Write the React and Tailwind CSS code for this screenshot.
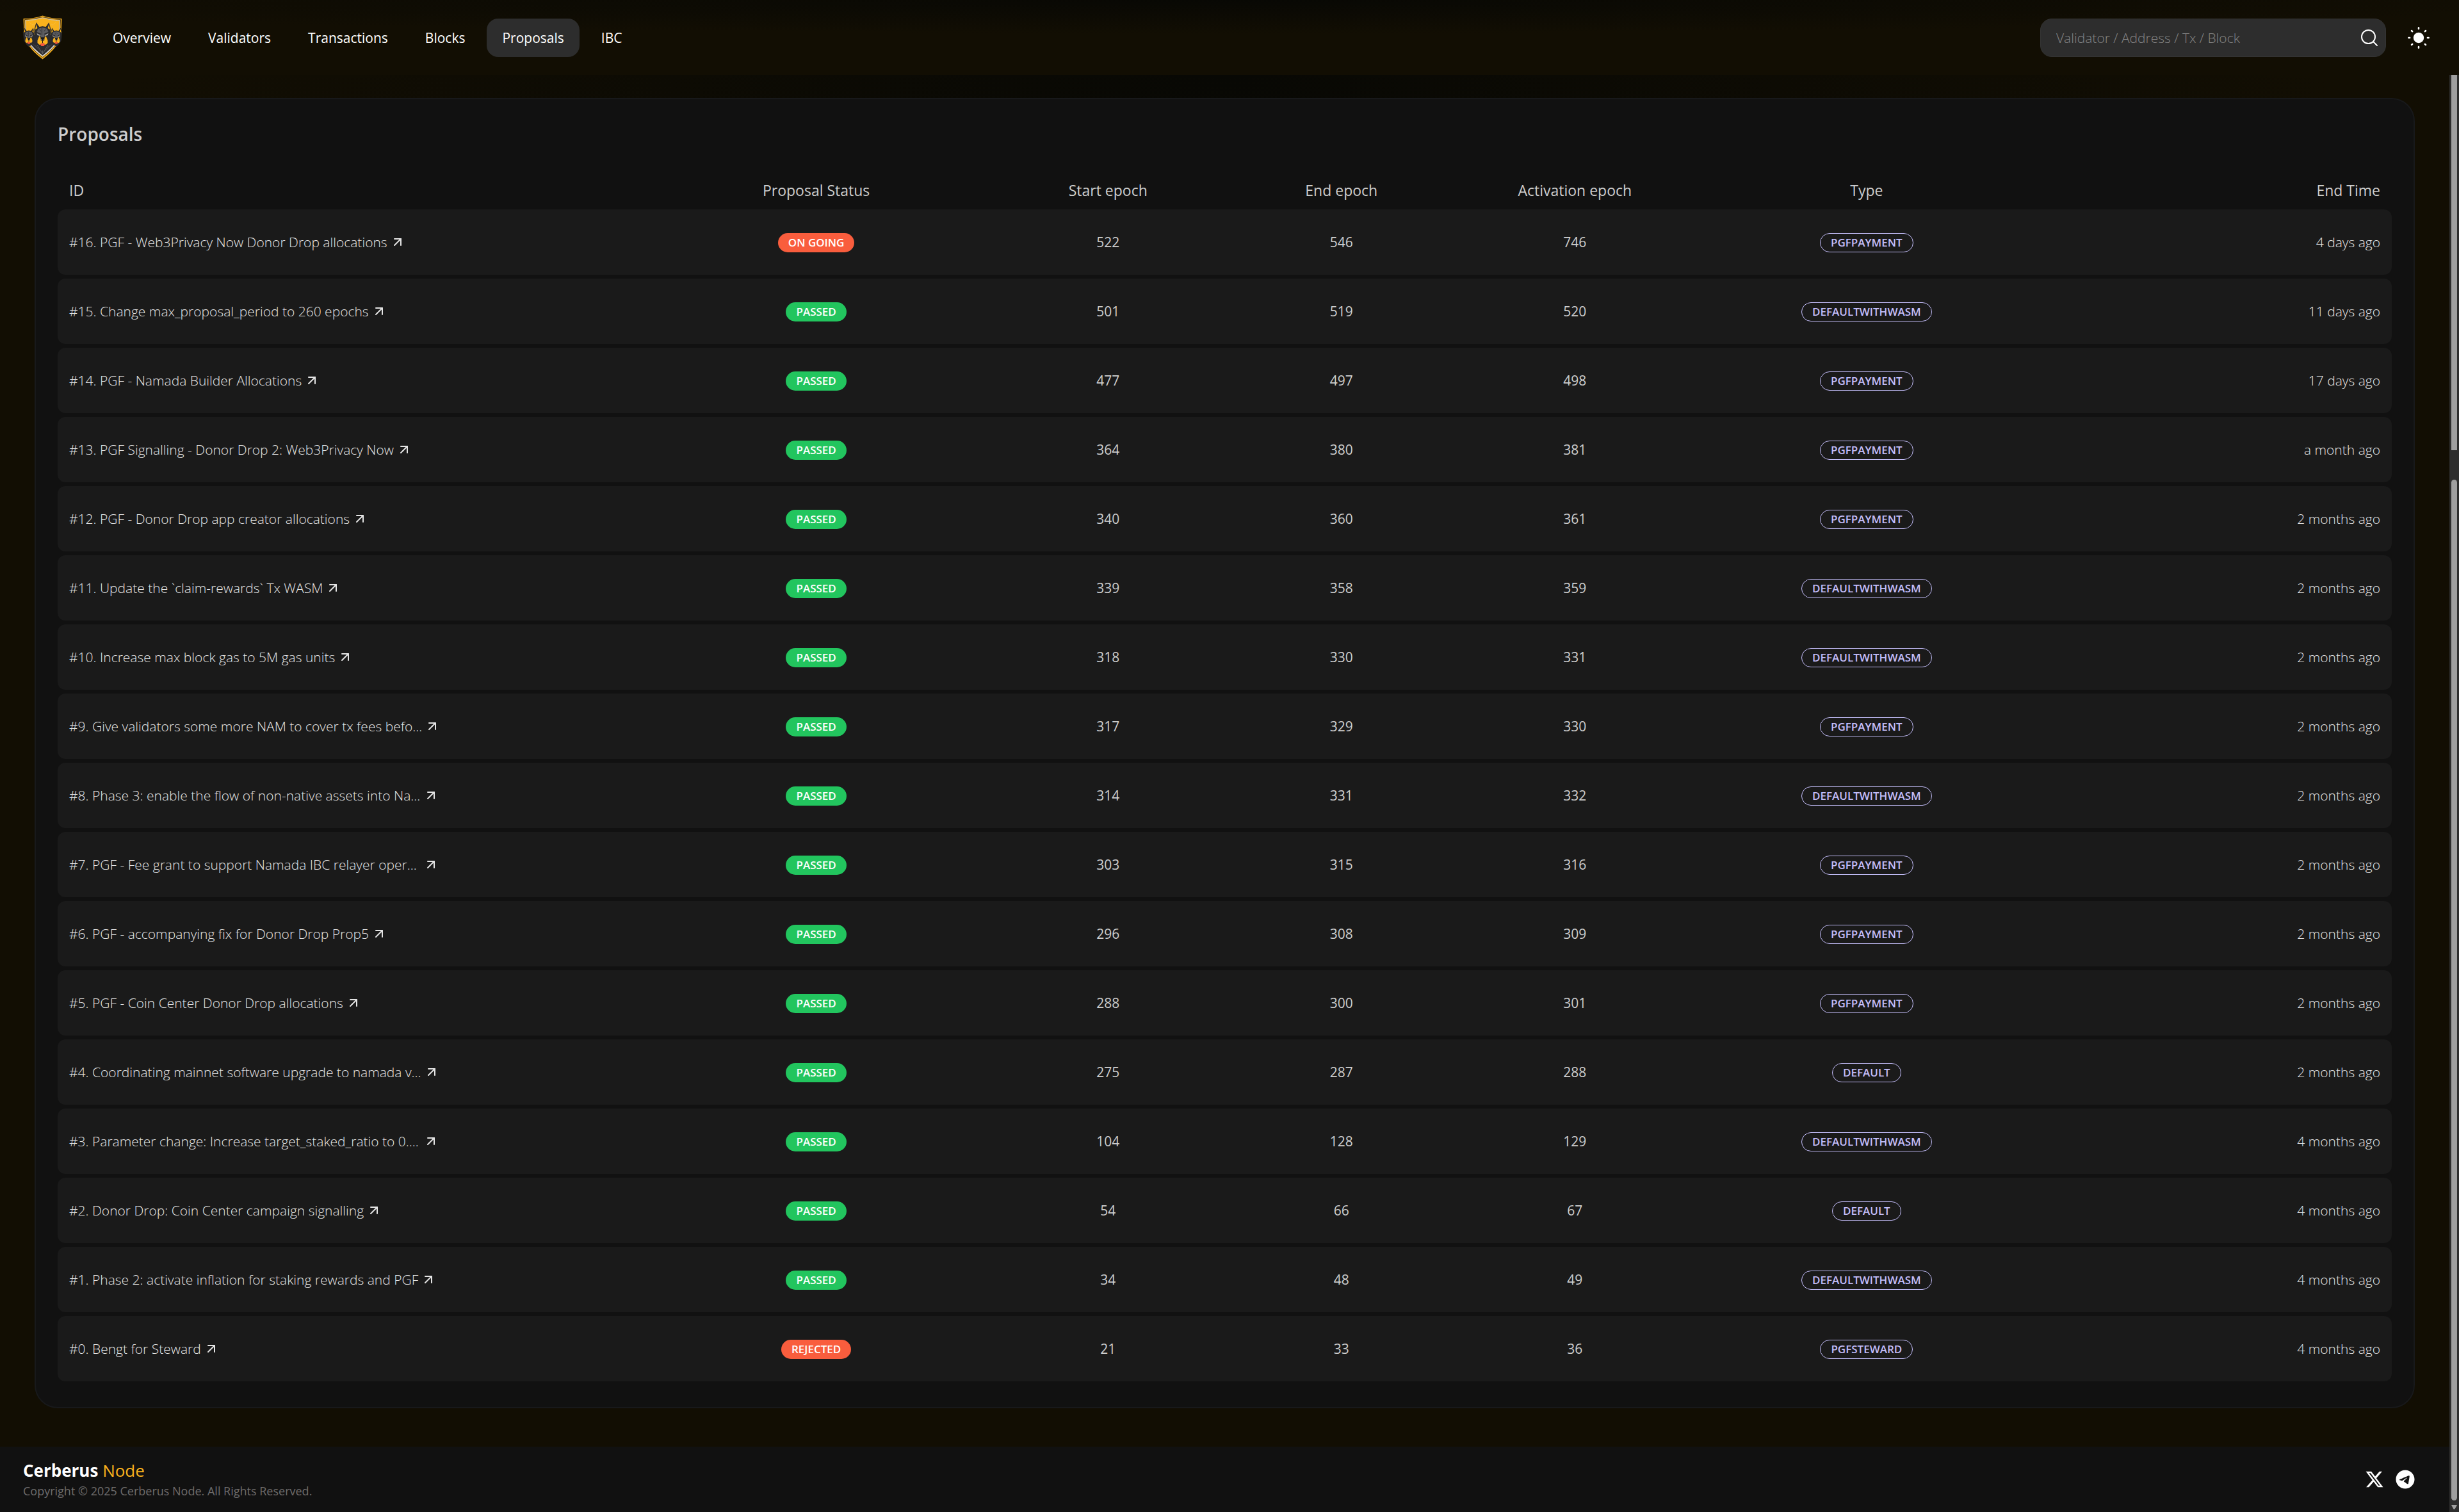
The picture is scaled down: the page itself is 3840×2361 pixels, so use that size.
import { ArrowUpRight } from 'lucide-react';
import { FaTelegram, FaXTwitter } from 'react-icons/fa6';

const NAV = ['Overview', 'Validators', 'Transactions', 'Blocks', 'Proposals', 'IBC'];

const PROPOSALS = [
  { title: '#16. PGF - Web3Privacy Now Donor Drop allocations', status: 'ON GOING', start: 522, end: 546, activation: 746, type: 'PGFPAYMENT', time: '4 days ago' },
  { title: '#15. Change max_proposal_period to 260 epochs', status: 'PASSED', start: 501, end: 519, activation: 520, type: 'DEFAULTWITHWASM', time: '11 days ago' },
  { title: '#14. PGF - Namada Builder Allocations', status: 'PASSED', start: 477, end: 497, activation: 498, type: 'PGFPAYMENT', time: '17 days ago' },
  { title: '#13. PGF Signalling - Donor Drop 2: Web3Privacy Now', status: 'PASSED', start: 364, end: 380, activation: 381, type: 'PGFPAYMENT', time: 'a month ago' },
  { title: '#12. PGF - Donor Drop app creator allocations', status: 'PASSED', start: 340, end: 360, activation: 361, type: 'PGFPAYMENT', time: '2 months ago' },
  { title: '#11. Update the `claim-rewards` Tx WASM', status: 'PASSED', start: 339, end: 358, activation: 359, type: 'DEFAULTWITHWASM', time: '2 months ago' },
  { title: '#10. Increase max block gas to 5M gas units', status: 'PASSED', start: 318, end: 330, activation: 331, type: 'DEFAULTWITHWASM', time: '2 months ago' },
  { title: '#9. Give validators some more NAM to cover tx fees befo...', clipped: true, status: 'PASSED', start: 317, end: 329, activation: 330, type: 'PGFPAYMENT', time: '2 months ago' },
  { title: '#8. Phase 3: enable the flow of non-native assets into Na...', clipped: true, status: 'PASSED', start: 314, end: 331, activation: 332, type: 'DEFAULTWITHWASM', time: '2 months ago' },
  { title: '#7. PGF - Fee grant to support Namada IBC relayer oper...', clipped: true, status: 'PASSED', start: 303, end: 315, activation: 316, type: 'PGFPAYMENT', time: '2 months ago' },
  { title: '#6. PGF - accompanying fix for Donor Drop Prop5', status: 'PASSED', start: 296, end: 308, activation: 309, type: 'PGFPAYMENT', time: '2 months ago' },
  { title: '#5. PGF - Coin Center Donor Drop allocations', status: 'PASSED', start: 288, end: 300, activation: 301, type: 'PGFPAYMENT', time: '2 months ago' },
  { title: '#4. Coordinating mainnet software upgrade to namada v...', clipped: true, status: 'PASSED', start: 275, end: 287, activation: 288, type: 'DEFAULT', time: '2 months ago' },
  { title: '#3. Parameter change: Increase target_staked_ratio to 0....', clipped: true, status: 'PASSED', start: 104, end: 128, activation: 129, type: 'DEFAULTWITHWASM', time: '4 months ago' },
  { title: '#2. Donor Drop: Coin Center campaign signalling', status: 'PASSED', start: 54, end: 66, activation: 67, type: 'DEFAULT', time: '4 months ago' },
  { title: '#1. Phase 2: activate inflation for staking rewards and PGF', status: 'PASSED', start: 34, end: 48, activation: 49, type: 'DEFAULTWITHWASM', time: '4 months ago' },
  { title: '#0. Bengt for Steward', status: 'REJECTED', start: 21, end: 33, activation: 36, type: 'PGFSTEWARD', time: '4 months ago' },
];

// one dog head, centred on 0,0; the shield uses it three times
function Hound() {
  return (
    <g>
      <path d="M-10 -17 L-13 -6 L-12 6 L-11 13 L-5 22 L0 27 L5 22 L11 13 L12 6 L13 -6 L10 -17 L5 -10 L0 -11 L-5 -10 Z" fill="#2b2b2d" />
      <path d="M-10 -14 L-11.500 -6 L-8 -8 Z M10 -14 L11.500 -6 L8 -8 Z" fill="#f9b21d" />
      <path d="M-7 -7 L0 -9 L7 -7 L9 -2 L3 0 L3 6 H-3 L-3 0 L-9 -2 Z" fill="#5d5d60" />
      <path d="M-1 -8 V3 M-5 -6 L-2 -3 M5 -6 L2 -3 M-11 2 L-9 8 M11 2 L9 8" stroke="#2b2b2d" strokeWidth="1" />
      <path d="M-9 0 L-3 3 L-4 4 L-8 3 Z M9 0 L3 3 L4 4 L8 3 Z" fill="#a9a9a9" />
      <path d="M-5 4 L-3 7 H3 L5 4 L8 11 L8 15 L5 18 L0 15 L-5 18 L-8 15 L-8 11 Z" fill="#f9b21d" />
      <path d="M-3 7 H3 L3 11 L0 12 L-3 11 Z" fill="#1b1b1c" />
      <path d="M-3 10 h1.500 M1.500 10 h1.500" stroke="#ddd" strokeWidth="1" />
      <path d="M0 12 V15" stroke="#1b1b1c" strokeWidth="1" />
      <path d="M-4 17 L0 15 L4 17 L2 20 H-2 Z" fill="#f4573c" />
    </g>
  );
}

function Logo() {
  return (
    <svg viewBox="0 0 61 69" className="h-[69px] w-[61px]" aria-hidden="true">
      <path d="M0.500 5 Q17 5 30.500 0.500 Q44 5 60.500 5 L59.500 27 Q58 48 30.500 68.500 Q3 48 1.500 27 Z" fill="#f9b21d" />
      <path d="M2.500 6.500 Q18 6 30.500 2.500 Q43 6 58.500 6.500 L57.500 27 Q56 47 30.500 66 Q5 47 3.500 27 Z" fill="#f9b21d" stroke="#4c3b22" strokeWidth="1" />
      <path d="M4 24 V8 Q18 7.500 30.500 4 Q43 7.500 57 8 V24" fill="none" stroke="#c4c4c4" strokeWidth="1" />
      <path d="M8 8 L14 15 L20 13 M53 8 L47 15 L41 13" fill="none" stroke="#f0cf85" strokeWidth="0.800" strokeDasharray="1 2" />
      <path d="M4 27 Q5 44 30.500 64 Q56 44 57 27 L50 30 H11 Z" fill="#2b2b2d" />
      <path d="M9 42 Q15 52 30.500 63.500 Q46 52 52 42" fill="none" stroke="#d4d4d4" strokeWidth="1.500" />
      <path d="M14 44 L22 48 L30.500 60 L39 48 L47 44 L30.500 60 Z" fill="#3d3d40" />
      <path d="M22 46 L30.500 60 L39 46 M30.500 50 V60" fill="none" stroke="#68686b" strokeWidth="0.800" />
      <g transform="translate(9 31) scale(0.680)"><Hound /></g>
      <g transform="translate(52 31) scale(0.680)"><Hound /></g>
      <g transform="translate(30.500 28)"><Hound /></g>
    </svg>
  );
}

function SunIcon() {
  return (
    <svg viewBox="0 0 36 36" className="size-9" fill="none" stroke="currentColor" strokeWidth="2.500" strokeLinecap="round" aria-hidden="true">
      <circle cx="18" cy="18" r="8.200" fill="currentColor" stroke="none" />
      <path d="M18 2.300v1.800M18 31.900v1.800M2.300 18h1.800M31.900 18h1.800M7 7l1.200 1.200M27.800 27.800l1.200 1.200M7 29l1.200-1.200M27.800 8.200L29 7" />
    </svg>
  );
}

function Header() {
  return (
    <header className="relative flex h-[117px] items-center justify-between bg-radial-[ellipse_55%_45%_at_50%_0%] from-[#080804] to-[#120e03] px-9">
      <div className="flex items-center gap-[55px]">
        <a href="#home" aria-label="Cerberus Node"><Logo /></a>
        <nav className="flex items-center gap-2.5">
          {NAV.map((item) => (
            <a
              key={item}
              href={`#${item.toLowerCase()}`}
              className={item === 'Proposals' ? 'flex h-[60px] items-center rounded-[18px] bg-[#2d2d2d] px-6' : 'flex h-[60px] items-center px-6'}
            >
              {item}
            </a>
          ))}
        </nav>
      </div>
      <div className="flex items-center gap-6">
        <form className="flex h-[60px] w-[540px] items-center rounded-[18px] border border-[#343434] bg-[#2d2d2d] pr-[10px] pl-6">
          <input type="text" aria-label="Search" placeholder="Validator / Address / Tx / Block" className="min-w-0 flex-1 bg-transparent font-light outline-none placeholder:text-[#858585]" />
          <button type="button" aria-label="Submit search">
            <svg viewBox="0 0 30 30" className="size-[30px]" fill="none" stroke="currentColor" strokeWidth="2" strokeLinecap="round" aria-hidden="true">
              <circle cx="13.500" cy="13.500" r="10.500" />
              <path d="M21 21L27 27" />
            </svg>
          </button>
        </form>
        <button type="button" aria-label="Toggle theme" className="p-[9px]"><SunIcon /></button>
      </div>
    </header>
  );
}

function ProposalRow({ proposal }) {
  const { title, clipped, status, start, end, activation, type, time } = proposal;
  return (
    <tr className="h-[102px] bg-[#1a1a1a] text-center">
      <td className="rounded-l-xl pl-[18px] text-left font-light text-[#e4e4e4]">
        <a href="#proposal" className="inline-flex items-center gap-1 whitespace-nowrap">
          <span className={clipped ? 'min-w-[549px]' : ''}>{title}</span>
          <ArrowUpRight className="size-6" strokeWidth={2} aria-hidden="true" />
        </a>
      </td>
      <td>
        <span className={`inline-flex h-[30px] items-center rounded-full px-4 align-middle text-[17px] font-semibold text-white ${status === 'PASSED' ? 'bg-[#22c55e]' : 'bg-[#f95d3d]'}`}>{status}</span>
      </td>
      <td>{start}</td>
      <td>{end}</td>
      <td>{activation}</td>
      <td>
        <span className="inline-flex h-[30px] items-center rounded-full border border-[#c4befa] px-4 align-middle text-[17px] font-semibold text-[#c4befa]">{type}</span>
      </td>
      <td className="rounded-r-xl pr-[18px] text-right font-light text-[#e4e4e4]">{time}</td>
    </tr>
  );
}

function Scrollbar() {
  return (
    <div className="flex w-[15px] shrink-0 flex-col items-center bg-[#2d2d2d] pb-1" aria-hidden="true">
      <div className="h-[586px] w-[9px] bg-[#9f9f9f]" />
      <div className="mt-[46px] w-[9px] flex-1 rounded-full bg-[#9f9f9f]" />
      <svg viewBox="0 0 9 7" className="mt-[7px] h-[7px] w-[9px]"><path d="M0 0H9L5.500 6.500H3.500Z" fill="#9f9f9f" /></svg>
    </div>
  );
}

export default function App() {
  return (
    <div className="flex min-h-screen flex-col bg-[#120e03] font-['Open_Sans',sans-serif] text-[21px] leading-[30px] text-white">
      <Header />
      <div className="flex flex-1">
        <div className="flex min-w-0 flex-1 flex-col">
          <main className="flex-1 bg-radial-[ellipse_45%_30%_at_50%_0%] from-[#080804] to-[#120e03] px-[54px] pt-9 pb-[60px]">
            <section className="rounded-[36px] border-2 border-[#18191b] bg-[#111] p-[34px] text-[#cdcdcd]">
              <h1 className="text-[28px] leading-10 font-semibold">Proposals</h1>
              <table className="mt-[38px] w-full table-fixed border-separate border-spacing-x-0 border-spacing-y-[6px]">
                <colgroup>
                  <col className="w-[25%]" />
                  <col className="w-[15%]" />
                  <col className="w-[10%]" />
                  <col className="w-[10%]" />
                  <col className="w-[10%]" />
                  <col className="w-[15%]" />
                  <col className="w-[15%]" />
                </colgroup>
                <thead>
                  <tr className="h-12 text-[23px] *:font-normal">
                    <th className="pl-[18px] text-left">ID</th>
                    <th>Proposal Status</th>
                    <th>Start epoch</th>
                    <th>End epoch</th>
                    <th>Activation epoch</th>
                    <th>Type</th>
                    <th className="pr-[18px] text-right">End Time</th>
                  </tr>
                </thead>
                <tbody>
                  {PROPOSALS.map((proposal) => (
                    <ProposalRow key={proposal.title} proposal={proposal} />
                  ))}
                </tbody>
              </table>
            </section>
          </main>
          <footer className="flex h-[102px] items-center justify-between bg-[#111] pr-[54px] pl-9">
            <div>
              <p className="text-[26px] leading-9 text-[#f9b21d]"><span className="font-bold text-white">Cerberus</span> Node</p>
              <p className="text-[18px] leading-7 text-[#6e6c6c]">Copyright © 2025 Cerberus Node. All Rights Reserved.</p>
            </div>
            <div className="flex items-center gap-[18px]">
              <a href="#x" aria-label="X"><FaXTwitter className="size-[30px]" /></a>
              <a href="#telegram" aria-label="Telegram"><FaTelegram className="size-[30px]" /></a>
            </div>
          </footer>
        </div>
        <Scrollbar />
      </div>
    </div>
  );
}
